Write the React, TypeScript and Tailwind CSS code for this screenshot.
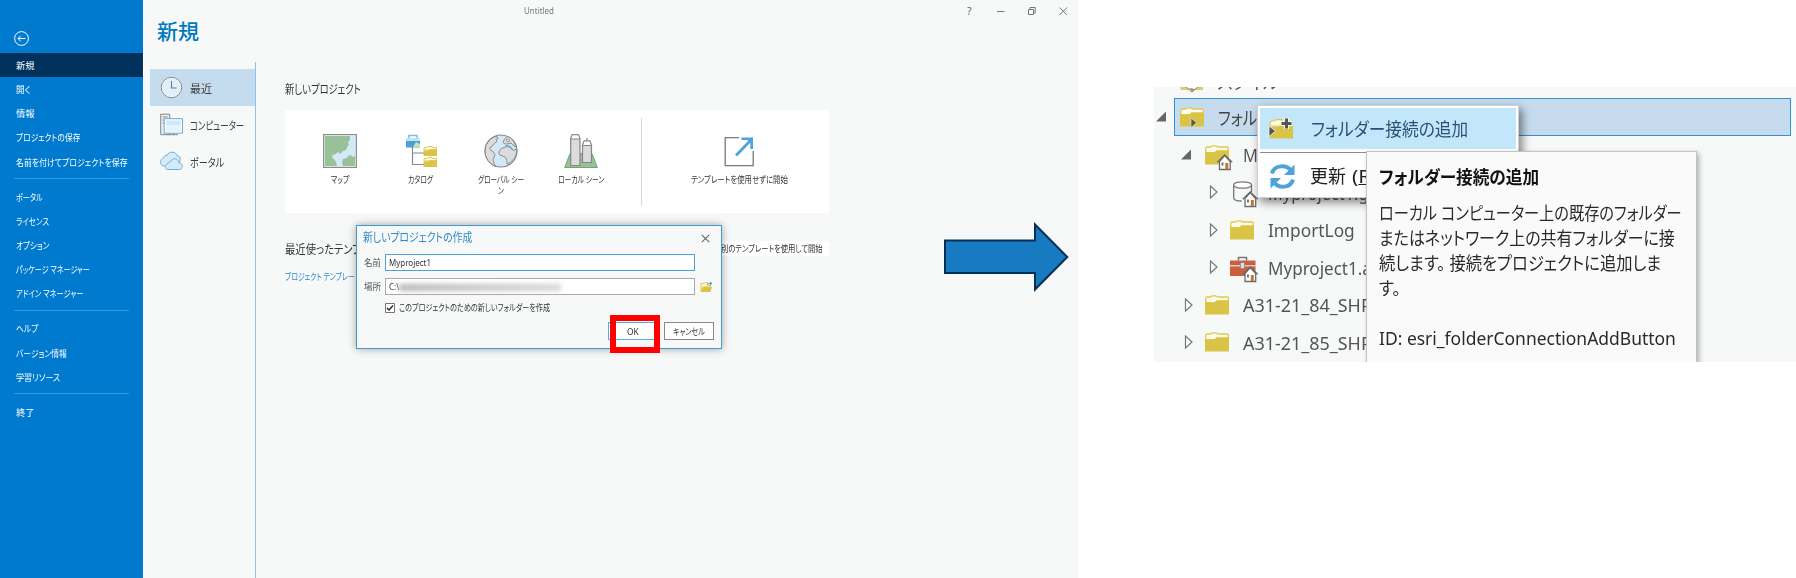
import { useLayoutEffect, useRef, type ReactNode } from "react";

const FONT = "font-['Noto_Sans','Noto_Sans_CJK_JP',sans-serif]";

/** Single line of text condensed horizontally to a given width. */
function T({ w, className = "", children }: { w: number; className?: string; children: ReactNode }) {
  const outer = useRef<HTMLSpanElement>(null);
  const inner = useRef<HTMLSpanElement>(null);
  useLayoutEffect(() => {
    if (outer.current && inner.current) {
      const natural = inner.current.offsetWidth;
      outer.current.style.width = `${w}px`;
      inner.current.style.transform = `scaleX(${w / natural})`;
    }
  });
  return (
    <span ref={outer} className={`inline-flex shrink-0 whitespace-nowrap ${className}`}>
      <span ref={inner} className="inline-block shrink-0 origin-left [font-feature-settings:'palt']">
        {children}
      </span>
    </span>
  );
}

/* ---------- Icons ---------- */

function FolderShape() {
  return (
    <>
      <path d="M.7 8V3.500C.7 2.500 1.300 2 2.200 2H5c1 0 1.300-1.200 2.500-1.200h3c1.200 0 1.500 1.200 2.500 1.200h9.200c.7 0 1.100.5 1.100 1.300V8z" fill="#fdfbe8" stroke="#dcc858" strokeWidth="1.300" />
      <path d="M0 7.200h9.500l2-2H24v14.300H0z" fill="#d9c446" />
    </>
  );
}

function House({ x, y }: { x: number; y: number }) {
  return (
    <g transform={`translate(${x} ${y})`}>
      <path d="M2.500 15.500V7.500L7.700 1.500l5.500 6v8z" fill="#fff" stroke="#6b6b6b" strokeWidth="1.300" />
      <path d="M.3 8.300 7.700.8l7.500 7.500" fill="none" stroke="#6b6b6b" strokeWidth="1.300" />
      <path d="M8.300 9h3v6h-3z" fill="#c07832" />
      <path d="M4.500 8.500h2v3h-2z" fill="#777" />
    </g>
  );
}

function Folder({ badge }: { badge?: "play" | "home" }) {
  return (
    <svg width="29" height="20" viewBox="0 0 29 20" className="shrink-0 overflow-visible">
      <FolderShape />
      {badge === "play" && <path d="M11 11v9.500l5.500-4.700z" fill="#555" stroke="#eee0a0" strokeWidth=".7" />}
      {badge === "home" && <House x={12} y={9} />}
    </svg>
  );
}

function Database() {
  return (
    <svg width="29" height="20" viewBox="0 0 29 20" className="shrink-0 overflow-visible">
      <path d="M3.700 3v13c0 2 3.500 3 8 3M21.500 3v7" fill="none" stroke="#777" strokeWidth="1.300" />
      <ellipse cx="12.600" cy="3" rx="9" ry="3.200" fill="#fff" stroke="#777" strokeWidth="1.300" />
      <House x={12.500} y={9} />
    </svg>
  );
}

function Toolbox() {
  return (
    <svg width="29" height="20" viewBox="0 0 29 20" className="shrink-0 overflow-visible">
      <path d="M8.500 3.500V.5h8v3" fill="none" stroke="#777" strokeWidth="1.500" />
      <path d="M0 3.500h25.500V19H0z" fill="#c8603f" />
      <path d="M0 8.800h25.500" stroke="#f5e4dd" strokeWidth="1.200" />
      <path d="M10.500 5.500h4v6h-4z" fill="#ddd" stroke="#888" strokeWidth=".8" />
      <House x={12.500} y={9} />
    </svg>
  );
}

function Refresh() {
  return (
    <svg width="27" height="27" viewBox="0 0 27 27" className="shrink-0">
      <path d="M3 10.500C5 2 17 1 22 7.500" fill="none" stroke="#4fa3da" strokeWidth="4" />
      <path d="M25.500 1.500V12H15z" fill="#4fa3da" />
      <path d="M24 16.500C22 25 10 26 5 19.500" fill="none" stroke="#4fa3da" strokeWidth="4" />
      <path d="M1.500 25.500V15H12z" fill="#4fa3da" />
    </svg>
  );
}

function AddFolder() {
  return (
    <svg width="26" height="22" viewBox="0 0 26 22" className="shrink-0 overflow-visible">
      <path d="M1 8V4.500L2.500 3H5l2-1.300h6V8z" fill="#fdfbe8" stroke="#dcc858" strokeWidth="1.200" />
      <path d="M.5 9h9l2-2h12.500v13.500H.5z" fill="#d9c446" />
      <path d="M0 8v10.500l6.500-5.500z" fill="#555" stroke="#fff" strokeWidth=".7" />
      <path d="M17.500 0v11M12 5.500h11" stroke="#fdfbe8" strokeWidth="5" />
      <path d="M17.500.5v10M12.500 5.500h10" stroke="#555" strokeWidth="3" />
    </svg>
  );
}

function MapIcon() {
  return (
    <svg width="34" height="34" viewBox="0 0 34 34">
      <path d="M.7.7h32.600v32.600H.7z" fill="#fff" stroke="#8a8a8a" strokeWidth="1.300" />
      <path d="M2 2h30v30H2z" fill="#98c197" />
      <path d="M27 2h5v20l-3 1-1-2-3 1-1 2-4 1-1 3 1 4h-6l-1-4-2-3-2-1 1-4 1 1 4-3 2 2 3-3 3-1 1-3 2-2-1-3 2-2z" fill="#d3e9f8" />
    </svg>
  );
}

function CatalogIcon() {
  return (
    <svg width="34" height="34" viewBox="0 0 34 34">
      <path d="M8.500 13v17.500H20M8.500 19H20" fill="none" stroke="#8a8a8a" strokeWidth="1.200" />
      <path d="M5 4V1.500h8V4" fill="none" stroke="#7fbbe4" strokeWidth="1.500" />
      <path d="M2 4h14v9.500H2z" fill="#4ba0d9" />
      <path d="M2 4h14v3H2z" fill="#c5e2f5" />
      <path d="m9 13 3-5 4 2v3z" fill="#c9e2b0" />
      {[12, 23].map((y) => (
        <g key={y} transform={`translate(19 ${y})`}>
          <path d="M1 4V1.500h2.500L5 .6h4l1 .9h3.500V4z" fill="#fffbe0" stroke="#dcc858" />
          <path d="M.5 4.500h5l1-1.200H14V10H.5z" fill="#d9c446" />
        </g>
      ))}
    </svg>
  );
}

function GlobeIcon() {
  return (
    <svg width="34" height="34" viewBox="0 0 34 34">
      <circle cx="17" cy="17" r="16" fill="#d3e9f8" stroke="#858585" strokeWidth="1.200" />
      <path d="M6 5.500 10 3l3-.5 1 2-2 1 1 2-3 2-2 3-2 1 0 2 3 2 2 3-1 3-1 2 1 4 2 3-4-2-4-4-2.500-5L1.200 17l.8-6z" fill="#dcdcdc" stroke="#858585" strokeWidth=".9" />
      <path d="M20 13.500l3-1.200 3 1.200 3 3 2-1 1.700 0-.5 5-2 4-4 4-3 1.500-.5-3.500-1-3-3-1.500-3-1-1-3 2.500-3.500z" fill="#dcdcdc" stroke="#858585" strokeWidth=".9" />
      <path d="M19 8.500 20.500 5l3-2.500 3.500 1.500 3 4 2 5-2-1-3-3-3 1-3 0z" fill="#dcdcdc" stroke="#858585" strokeWidth=".9" />
      <path d="M21 12.500c3-2 6 0 8 3" fill="none" stroke="#6bb0dc" strokeWidth="1.200" />
      <circle cx="24" cy="6.500" r="1.500" fill="#d3e9f8" stroke="#858585" strokeWidth=".8" />
    </svg>
  );
}

function LocalIcon() {
  return (
    <svg width="34" height="34" viewBox="0 0 34 34">
      <path d="M6 19.500h22l5.300 14H.7z" fill="#98c197" stroke="#6ea870" />
      <path d="M6.700 5 8 .8h6.500L16 5v26.500H6.700z" fill="#dcdcdc" stroke="#858585" strokeWidth="1.200" />
      <path d="M6.700 5 8 .8h6.500L16 5z" fill="#fff" stroke="#858585" />
      <path d="M23 4v3" stroke="#858585" strokeWidth="1.200" />
      <path d="M18.500 11.500 20 7h6l1.500 4.500v17h-9z" fill="#dcdcdc" stroke="#858585" strokeWidth="1.200" />
      <path d="M18.500 11.500 20 7h6l1.500 4.500z" fill="#fff" stroke="#858585" />
    </svg>
  );
}

function StartIcon() {
  return (
    <svg width="34" height="34" viewBox="0 0 34 34">
      <path d="M17 3.700H3.200v28h28V17" fill="none" stroke="#7a7a7a" strokeWidth="1.300" />
      <path d="M14 21.500 28 7" stroke="#4fa3da" strokeWidth="2.800" />
      <path d="M19.500 3.500H31V15h-2.700V8.500L25.500 6h-6z" fill="#4fa3da" />
    </svg>
  );
}

function ClockIcon() {
  return (
    <svg width="23" height="23" viewBox="0 0 23 23">
      <circle cx="11.500" cy="11.500" r="9.800" fill="#dff0fb" stroke="#fff" strokeWidth="1.500" />
      <circle cx="11.500" cy="11.500" r="10.200" fill="none" stroke="#858585" />
      <path d="M11.500 5v7h5" fill="none" stroke="#777" strokeWidth="1.100" />
    </svg>
  );
}

function ComputerIcon() {
  return (
    <svg width="23" height="23" viewBox="0 0 23 23">
      <path d="M.7 1.200h9v20.500h-9z" fill="#eee" stroke="#858585" />
      <path d="M2.500 4h5M2.500 7h2M2.500 10h2M8.500 21.700H18M13.500 20v2" stroke="#858585" />
      <path d="M4.200 5.700h18.300v14.500H4.200z" fill="#fff" stroke="#5fabe0" />
      <path d="M6 7.500h14.700v5H6z" fill="#cfe8f9" />
      <path d="M6 12.500h14.700v6H6z" fill="#e4f2fc" />
    </svg>
  );
}

function CloudIcon() {
  return (
    <svg width="23" height="23" viewBox="0 0 23 23">
      <path d="M5 16C1.500 16 .6 14 .6 12c0-2.500 1.500-3.500 3-4 .3-2 2-3 3.500-2.700C8 3 10 2.200 12 2.200c3 0 4.300 1.500 5 3.500 2.500 0 3.500 2 3.300 4-1 6-9 7-15.300 6.300z" fill="#d6ebfa" stroke="#6bb0e0" />
      <path d="M8 19.500c-2 0-2.700-1.500-2.700-3s1.200-2.500 2.400-2.500c.3-2 1.600-2.600 3-2.500.8-2 2.500-3 4.300-2.700 2.500.3 3.600 2 3.800 4 2.500 0 3.500 2 3.500 3.500 0 2-1.300 3.200-3 3.200z" fill="#d6ebfa" stroke="#6bb0e0" />
    </svg>
  );
}

function CloseIcon() {
  return (
    <svg width="9" height="9" viewBox="0 0 9 9">
      <path d="m.8.800 7.400 7.400M8.200.800.8 8.200" stroke="#666" strokeWidth="1.100" />
    </svg>
  );
}

/* ---------- Backstage window ---------- */

type Item = { label: string; w: number; active?: boolean };

const MENU: Item[][] = [
  [
    { label: "新規", w: 18, active: true },
    { label: "開く", w: 15 },
    { label: "情報", w: 18 },
    { label: "プロジェクトの保存", w: 64 },
    { label: "名前を付けてプロジェクトを保存", w: 112 },
  ],
  [
    { label: "ポータル", w: 27 },
    { label: "ライセンス", w: 33 },
    { label: "オプション", w: 33 },
    { label: "パッケージ マネージャー", w: 74 },
    { label: "アドイン マネージャー", w: 67 },
  ],
  [
    { label: "ヘルプ", w: 22 },
    { label: "バージョン情報", w: 51 },
    { label: "学習リソース", w: 44 },
  ],
  [{ label: "終了", w: 18 }],
];

function Sidebar() {
  return (
    <nav className="flex w-[143px] shrink-0 flex-col bg-[#007acf] text-[9.200px] text-white">
      <div className="flex h-[53px] items-end pb-[7px] pl-[14px]">
        <svg width="15" height="15" viewBox="0 0 15 15">
          <circle cx="7.500" cy="7.500" r="6.900" fill="none" stroke="#fff" strokeWidth="1" />
          <path d="M11.500 7.500h-7.500M6.800 4.700 4 7.500l2.800 2.800" fill="none" stroke="#fff" strokeWidth="1" />
        </svg>
      </div>
      {MENU.map((group, g) => (
        <div key={g}>
          {g > 0 && <div className="mx-[14px] mt-[4.500px] mb-[5.500px] h-px bg-[#2f9ae3]" />}
          {group.map((it) => (
            <div
              key={it.label}
              className={`flex h-[24.150px] items-center pt-px pl-[16px] leading-none ${it.active ? "bg-[#00315c]" : ""}`}
            >
              <T w={it.w}>{it.label}</T>
            </div>
          ))}
        </div>
      ))}
    </nav>
  );
}

const SOURCES = [
  { label: "最近", w: 22, icon: <ClockIcon />, active: true },
  { label: "コンピューター", w: 54, icon: <ComputerIcon />, active: false },
  { label: "ポータル", w: 34, icon: <CloudIcon />, active: false },
];

function Sources() {
  return (
    <div className="flex w-[112px] shrink-0 flex-col pl-[6px]">
      <div className="flex h-[62px] items-center pt-[2px] pl-[7px] text-[21px] font-medium text-[#0079c1]">
        <T w={42}>新規</T>
      </div>
      <div className="flex grow flex-col border-r border-[#8fc2e4] pt-[7px]">
        {SOURCES.map((s) => (
          <div
            key={s.label}
            className={`flex h-[37px] items-center gap-[7px] pl-[10px] text-[11.500px] leading-none text-[#3c3c3c] ${s.active ? "bg-[#c5dbee]" : ""}`}
          >
            {s.icon}
            <span className="flex pt-[2px]">
              <T w={s.w}>{s.label}</T>
            </span>
          </div>
        ))}
      </div>
    </div>
  );
}

function Template({ icon, children, className }: { icon: ReactNode; children: ReactNode; className: string }) {
  return (
    <div className={`flex shrink-0 flex-col items-center pt-[24px] text-[9px] leading-[11px] text-[#333] ${className}`}>
      {icon}
      <div className="mt-[6px] flex flex-col items-center">{children}</div>
    </div>
  );
}

function Dialog() {
  return (
    <div className="absolute top-[225px] left-[356px] flex h-[124px] w-[366px] flex-col border-[1.500px] border-[#3f9ad0] bg-[#f7f9f9] text-[9px] leading-none text-[#555] shadow-[0_0_8px_rgba(0,0,0,0.35)]">
      <div className="flex h-[28px] items-center justify-between pr-[11px] pb-[4px] pl-[6px] text-[12px] text-[#2b88c9]">
        <T w={109}>新しいプロジェクトの作成</T>
        <CloseIcon />
      </div>
      <div className="flex h-[17px] items-center pl-[7px]">
        <T w={17}>名前</T>
        <div className="ml-[4px] flex h-[17px] w-[310px] items-center border border-[#4ba3d8] bg-white pt-px pl-[3px] text-[9.500px] text-[#333]">
          <T w={42}>Myproject1</T>
        </div>
      </div>
      <div className="mt-[7px] flex h-[17px] items-center pl-[7px]">
        <T w={17}>場所</T>
        <div className="ml-[4px] flex h-[17px] w-[310px] items-center border border-[#ababab] bg-white pt-px pl-[3px] text-[9.500px] text-[#333]">
          <T w={10}>C:\</T>
          <span className="h-[7px] w-[162px] bg-linear-to-r from-[#b8b8b8] to-[#d8d8d8] blur-[2.500px]" />
        </div>
        <svg width="13" height="12" viewBox="0 0 13 12" className="ml-[5px]">
          <path d="M1 10V2.500h3l1-1h2.500v3H11" fill="#fff8cf" stroke="#dcc858" />
          <path d="M.5 11 3 5.500h9L10.500 11z" fill="#d9c446" />
          <path d="M7 3.500c.5-1.500 1.500-1.500 3-1.500V.5L12.500 2.500 10 4.500V3" fill="#4fa3da" />
        </svg>
      </div>
      <div className="mt-[7px] flex h-[11px] items-center pl-[28px] text-[#333]">
        <svg width="10" height="10" viewBox="0 0 10 10">
          <path d="M.5.5h9v9h-9z" fill="#fff" stroke="#777" />
          <path d="m2 5 2 2 4-4.500" fill="none" stroke="#222" strokeWidth="1.300" />
        </svg>
        <span className="ml-[4px] flex">
          <T w={151}>このプロジェクトのための新しいフォルダーを作成</T>
        </span>
      </div>
      <div className="mt-[9px] flex justify-end gap-[6px] pr-[7px] text-[#333]">
        <div className="flex h-[18px] w-[50px] items-center justify-center border border-[#5ba9dc] bg-white pt-px">
          <T w={12}>OK</T>
        </div>
        <div className="flex h-[18px] w-[50px] items-center justify-center border border-[#888] bg-white pt-px">
          <T w={32}>キャンセル</T>
        </div>
      </div>
      <div className="absolute top-[89px] left-[253px] h-[38px] w-[50px] border-[6px] border-[#fe0000]" />
    </div>
  );
}

function Backstage() {
  return (
    <div className="relative flex h-[578px] w-[1078px] shrink-0 bg-[#f7f9f9]">
      <Sidebar />
      <div className="w-px shrink-0 bg-white" />
      <Sources />
      <div className="flex grow flex-col">
        <header className="flex h-[22px] items-center pr-[3px] text-[#666]">
          <div className="flex grow pt-px pl-[268px] text-[8.500px] leading-none text-[#777]">
            <T w={30}>Untitled</T>
          </div>
          <span className="w-[5px] text-[10.500px] leading-none">?</span>
          <svg width="102" height="10" viewBox="0 0 102 10" className="ml-[1px]" fill="none" stroke="#777" strokeWidth="1">
            <path d="M24 5.500h7.500M55.500 3.500h5v5h-5zM57 3.500v-2h5.200V7h-1.700M86.500 1.500l7.500 7.500M94 1.500 86.500 9" />
          </svg>
        </header>
        <main className="flex w-[574px] flex-col pl-[29px]">
          <div className="mt-[59px] flex h-[18px] items-center text-[12px] leading-none text-[#333]">
            <T w={76}>新しいプロジェクト</T>
          </div>
          <div className="mt-[11px] flex h-[103px] w-[544px] rounded-[2px] bg-white">
            <Template className="ml-[15px] w-[80px]" icon={<MapIcon />}>
              <T w={18}>マップ</T>
            </Template>
            <Template className="w-[81px]" icon={<CatalogIcon />}>
              <T w={25}>カタログ</T>
            </Template>
            <Template className="w-[80px]" icon={<GlobeIcon />}>
              <T w={46}>グローバル シー</T>
              <T w={6}>ン</T>
            </Template>
            <Template className="w-[80px]" icon={<LocalIcon />}>
              <T w={46}>ローカル シーン</T>
            </Template>
            <div className="mt-[8px] ml-[20px] h-[88px] w-px shrink-0 bg-[#d8d8d8]" />
            <Template className="ml-[44px] w-[106px]" icon={<StartIcon />}>
              <T w={97}>テンプレートを使用せずに開始</T>
            </Template>
          </div>
          <div className="mt-[28px] flex h-[15px] w-[544px] items-center justify-between leading-none">
            <div className="flex pt-[2px] text-[12px] text-[#333]">
              <T w={104}>最近使ったテンプレート</T>
            </div>
            <div className="flex h-[15px] items-center rounded-[2px] bg-white px-[6px] text-[9px] text-[#333]">
              <T w={102}>別のテンプレートを使用して開始</T>
            </div>
          </div>
          <div className="mt-[14px] flex text-[9.500px] leading-[14px] text-[#2b88c9]">
            <T w={75}>プロジェクト テンプレート</T>
          </div>
        </main>
      </div>
      <Dialog />
      <svg width="126" height="70" viewBox="0 0 126 70" className="absolute top-[222px] left-[943px]">
        <path d="M2 18.500h90V2.500l32.300 32.500L92 67.500v-16.500H2z" fill="#187ac1" stroke="#042f55" strokeWidth="2" />
      </svg>
    </div>
  );
}

/* ---------- Catalog pane ---------- */

function Arrow({ open }: { open?: boolean }) {
  return (
    <svg width="12" height="14" viewBox="0 0 12 14" className="shrink-0">
      {open ? (
        <path d="M11 1.500v10H1z" fill="#666" />
      ) : (
        <path d="M3.500 1v12L10 7z" fill="#fff" stroke="#777" strokeWidth="1.200" />
      )}
    </svg>
  );
}

const ROWS = [
  { label: "Myproject1", w: 86, icon: <Folder badge="home" />, open: true, pad: "pl-[26px]" },
  { label: "Myproject1.gdb", w: 121, icon: <Database />, open: false, pad: "pl-[53px]" },
  { label: "ImportLog", w: 87, icon: <Folder />, open: false, pad: "pl-[53px]" },
  { label: "Myproject1.atbx", w: 129, icon: <Toolbox />, open: false, pad: "pl-[53px]" },
  { label: "A31-21_84_SHP", w: 129, icon: <Folder />, open: false, pad: "pl-[28px]" },
  { label: "A31-21_85_SHP", w: 129, icon: <Folder />, open: false, pad: "pl-[28px]" },
];

function CatalogPane() {
  return (
    <div className="relative mt-[87px] ml-[76px] flex h-[275px] w-[642px] flex-col overflow-hidden bg-[#f7f9f9] text-[18.500px] leading-none text-[#555]">
      <div className="flex h-[11px] shrink-0 items-end pl-[26px]">
        <svg width="24" height="20" viewBox="0 0 24 20" className="mb-[5px]">
          <path d="M0 14h7l3 3H1zM16 14h7v3h-9z" fill="#dccb70" />
          <path d="m5 13 7 6 7-6" fill="#fff" stroke="#777" />
          <path d="m9 15 3 3 3-2z" fill="#c07040" />
        </svg>
        <span className="mb-[7px] ml-[13px] flex">
          <T w={62}>スタイル</T>
        </span>
      </div>
      <div className="flex h-[38px] shrink-0 items-center">
        <span className="w-[20px] pl-[1px]">
          <Arrow open />
        </span>
        <div className="flex h-[38px] w-[617px] items-center border-[1.500px] border-[#3093d3] bg-[#c6dbee] pl-[5px] text-[#444]">
          <Folder badge="play" />
          <span className="ml-[9px] flex pt-[2px]">
            <T w={68}>フォルダー</T>
          </span>
        </div>
      </div>
      {ROWS.map((r, i) => (
        <div key={i} className={`flex h-[37.500px] shrink-0 items-center ${r.pad}`}>
          <Arrow open={r.open} />
          <span className={`flex ${r.open ? "ml-[13px]" : "ml-[11px]"}`}>{r.icon}</span>
          <span className="ml-[9px] flex pt-px">
            <T w={r.w}>{r.label}</T>
          </span>
        </div>
      ))}

      <div className="absolute top-[18px] left-[103px] flex h-[93px] w-[262px] flex-col border border-[#d0d0d4] bg-white p-[2px] text-[#222] shadow-[3px_4px_9px_rgba(0,0,0,0.5)]">
        <div className="flex h-[41px] shrink-0 items-center bg-[#c3e7fa] pl-[9px] text-[#2b5078]">
          <AddFolder />
          <span className="ml-[16px] flex pt-[2px]">
            <T w={157}>フォルダー接続の追加</T>
          </span>
        </div>
        <div className="mt-[3px] h-px shrink-0 bg-[#8c8c8c]" />
        <div className="flex grow items-center pt-[4px] pl-[9px]">
          <Refresh />
          <span className="ml-[14px] flex gap-[6px]">
            <T w={36}>更新</T>
            <T w={26}>
              (<u>R</u>)
            </T>
          </span>
        </div>
      </div>

      <div className="absolute top-[64px] left-[212px] flex h-[212px] w-[331px] flex-col border border-[#c2c2c8] bg-[#fafafa] pt-[13px] pl-[12px] text-[18px] leading-[25px] text-[#2a2a2a] shadow-[2px_2px_5px_rgba(0,0,0,0.3)]">
        <div className="flex font-bold text-[#111]">
          <T w={160}>フォルダー接続の追加</T>
        </div>
        <p className="mt-[11px] flex flex-col">
          <T w={303}>ローカル コンピューター上の既存のフォルダー</T>
          <T w={296}>またはネットワーク上の共有フォルダーに接</T>
          <T w={282}>続します。 接続をプロジェクトに追加しま</T>
          <T w={22}>す。</T>
        </p>
        <div className="mt-[25px] flex">
          <T w={297}>ID: esri_folderConnectionAddButton</T>
        </div>
      </div>
    </div>
  );
}

export default function App() {
  return (
    <div className={`flex h-[578px] w-[1796px] items-start overflow-hidden bg-white ${FONT}`}>
      <Backstage />
      <CatalogPane />
    </div>
  );
}
